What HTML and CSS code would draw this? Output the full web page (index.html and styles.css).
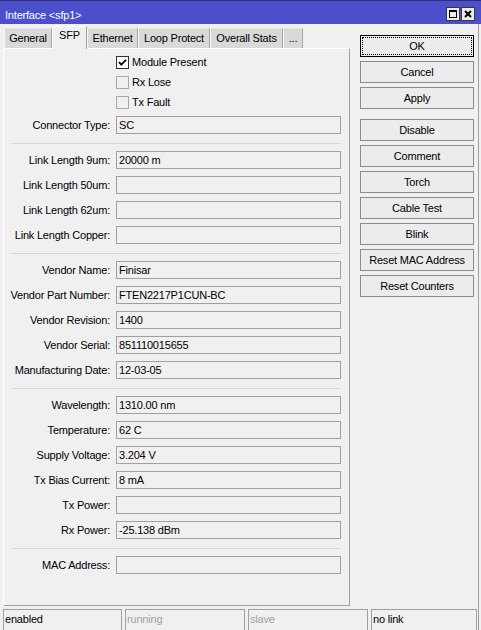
FILE: index.html
```html
<!DOCTYPE html>
<html>
<head>
<meta charset="utf-8">
<title>Interface &lt;sfp1&gt;</title>
<link rel="stylesheet" href="styles.css">
</head>
<body>
<div class="window">
  <div class="titlebar">
    <span class="title">Interface &lt;sfp1&gt;</span>
    <div class="tb-btns">
      <span class="tb-btn"><svg width="12" height="12" viewBox="0 0 12 12"><rect x="2.5" y="2.5" width="7" height="7" fill="none" stroke="#000" stroke-width="1"/><rect x="2" y="2" width="8" height="2" fill="#000"/></svg></span>
      <span class="tb-btn"><svg width="12" height="12" viewBox="0 0 12 12"><path d="M3 3 L9 9 M9 3 L3 9" stroke="#000" stroke-width="2" fill="none"/></svg></span>
    </div>
  </div>
  <div class="body-area">
    <div class="main">
      <div class="left">
        <div class="tabs">
          <span class="tab t-general">General</span>
          <span class="tab active t-sfp">SFP</span>
          <span class="tab t-eth">Ethernet</span>
          <span class="tab t-loop">Loop Protect</span>
          <span class="tab t-stats">Overall Stats</span>
          <span class="tab t-more">...</span>
        </div>
        <div class="panel">
          <div class="form">
            <div class="chk-row"><span class="cb checked"><svg width="11" height="11" viewBox="0 0 11 11"><path d="M2 5.2 L4.3 7.6 L9 2.8" stroke="#000" stroke-width="1.8" fill="none"/></svg></span><span class="chk-label">Module Present</span></div>
            <div class="chk-row"><span class="cb"></span><span class="chk-label">Rx Lose</span></div>
            <div class="chk-row"><span class="cb"></span><span class="chk-label">Tx Fault</span></div>
            <div class="row"><span class="lbl">Connector Type:</span><span class="field">SC</span></div>
            <div class="sep"></div>
            <div class="row"><span class="lbl">Link Length 9um:</span><span class="field">20000 m</span></div>
            <div class="row"><span class="lbl">Link Length 50um:</span><span class="field"></span></div>
            <div class="row"><span class="lbl">Link Length 62um:</span><span class="field"></span></div>
            <div class="row"><span class="lbl">Link Length Copper:</span><span class="field"></span></div>
            <div class="sep"></div>
            <div class="row"><span class="lbl">Vendor Name:</span><span class="field">Finisar</span></div>
            <div class="row"><span class="lbl">Vendor Part Number:</span><span class="field">FTEN2217P1CUN-BC</span></div>
            <div class="row"><span class="lbl">Vendor Revision:</span><span class="field">1400</span></div>
            <div class="row"><span class="lbl">Vendor Serial:</span><span class="field">851110015655</span></div>
            <div class="row"><span class="lbl">Manufacturing Date:</span><span class="field">12-03-05</span></div>
            <div class="sep"></div>
            <div class="row"><span class="lbl">Wavelength:</span><span class="field">1310.00 nm</span></div>
            <div class="row"><span class="lbl">Temperature:</span><span class="field">62 C</span></div>
            <div class="row"><span class="lbl">Supply Voltage:</span><span class="field">3.204 V</span></div>
            <div class="row"><span class="lbl">Tx Bias Current:</span><span class="field">8 mA</span></div>
            <div class="row"><span class="lbl">Tx Power:</span><span class="field"></span></div>
            <div class="row"><span class="lbl">Rx Power:</span><span class="field">-25.138 dBm</span></div>
            <div class="sep"></div>
            <div class="row"><span class="lbl">MAC Address:</span><span class="field"></span></div>
          </div>
        </div>
      </div>
      <div class="buttons">
        <div class="btn btn-ok">OK</div>
        <div class="btn">Cancel</div>
        <div class="btn">Apply</div>
        <div class="btn group-start">Disable</div>
        <div class="btn">Comment</div>
        <div class="btn">Torch</div>
        <div class="btn">Cable Test</div>
        <div class="btn">Blink</div>
        <div class="btn">Reset MAC Address</div>
        <div class="btn">Reset Counters</div>
      </div>
    </div>
    <div class="status">
      <span class="cell c1">enabled</span>
      <span class="cell c2 dim">running</span>
      <span class="cell c3 dim">slave</span>
      <span class="cell c4">no link</span>
    </div>
  </div>
</div>
</body>
</html>
```
FILE: styles.css
```css
html, body {
  margin: 0;
  padding: 0;
  background: #f0f0f0;
}
body {
  font-family: "Liberation Sans", Arial, sans-serif;
  font-size: 11px;
  letter-spacing: -0.2px;
  color: #000;
}
.window {
  width: 481px;
  height: 630px;
  overflow: hidden;
  background: #f0f0f0;
}
.titlebar {
  height: 24px;
  box-sizing: border-box;
  border-top: 1px solid #2d2f6e;
  background: #4b4fcc;
  display: flex;
  align-items: flex-start;
  padding-left: 5px;
}
.title {
  color: #fff;
  line-height: 13px;
  margin-top: 8px;
}
.tb-btns {
  margin-left: auto;
  margin-right: 6px;
  margin-top: 6px;
  display: flex;
  gap: 1px;
}
.tb-btn {
  width: 14px;
  height: 14px;
  box-sizing: border-box;
  border: 1px solid #3a3a3a;
  background: #ececec;
  display: flex;
  align-items: center;
  justify-content: center;
}
.tb-btn svg { display: block; }
.body-area {
  width: 479px;
  box-sizing: border-box;
  border-right: 1px solid #a0a0a0;
  height: 606px;
}
.main {
  display: flex;
  height: 582px;
}
.left {
  margin-left: 3px;
  width: 347px;
  display: flex;
  flex-direction: column;
}
.tabs {
  display: flex;
  margin-top: 2px;
  margin-left: 1px;
  height: 22px;
  align-items: flex-end;
}
.tab {
  box-sizing: border-box;
  height: 20px;
  line-height: 18px;
  text-align: center;
  background: #d9d9d9;
  border-top: 1px solid #e6e6e6;
  border-left: 1px solid #f6f6f6;
  border-right: 1px solid #a8a8a8;
  white-space: nowrap;
}
.tab.active {
  height: 23px;
  line-height: 17px;
  margin-bottom: -1px;
  background: #f0f0f0;
  border-top: 1px solid #ffffff;
  border-left: 1px solid #ffffff;
  border-right: 1px solid #a0a0a0;
  position: relative;
  z-index: 1;
  padding-bottom: 3px;
}
.t-general { width: 48px; }
.t-sfp { width: 35px; }
.t-eth { width: 51px; }
.t-loop { width: 72px; }
.t-stats { width: 73px; }
.t-more { width: 20px; }
.panel {
  flex: 1;
  box-sizing: border-box;
  border-top: 1px solid #ffffff;
  border-left: 1px solid #ffffff;
  border-right: 1px solid #a0a0a0;
  border-bottom: 1px solid #a0a0a0;
  background: #f0f0f0;
}
.form {
  display: flex;
  flex-direction: column;
  gap: 7px;
  padding-top: 7px;
}
.chk-row {
  height: 13px;
  display: flex;
  align-items: center;
  padding-left: 112px;
}
.cb {
  width: 13px;
  height: 13px;
  box-sizing: border-box;
  border: 1px solid #a8a8a8;
  background: #f0f0f0;
  display: flex;
  align-items: center;
  justify-content: center;
}
.cb.checked {
  border-color: #333;
  background: #fff;
}
.cb svg { display: block; }
.chk-label {
  margin-left: 3px;
  line-height: 13px;
}
.row {
  height: 18px;
  display: flex;
  align-items: center;
}
.lbl {
  width: 106px;
  text-align: right;
  margin-right: 6px;
  white-space: nowrap;
}
.field {
  width: 225px;
  height: 18px;
  box-sizing: border-box;
  border: 1px solid #a0a0a0;
  background: #f0f0f0;
  padding-left: 2px;
  line-height: 16px;
  white-space: nowrap;
}
.sep {
  height: 3px;
  margin-left: 7px;
  width: 330px;
  box-sizing: border-box;
  border-bottom: 1px solid #d6d6d6;
}
.buttons {
  margin-left: 10px;
  width: 114px;
  padding-top: 11px;
  display: flex;
  flex-direction: column;
  gap: 4px;
}
.btn {
  height: 22px;
  box-sizing: border-box;
  border: 1px solid #8c8c8c;
  background: #ececec;
  text-align: center;
  line-height: 20px;
  white-space: nowrap;
}
.btn-ok {
  border-color: #000;
  outline: 1px dotted #000;
  outline-offset: -3px;
}
.group-start {
  margin-top: 6px;
}
.status {
  display: flex;
  gap: 3px;
  margin-top: 3px;
  padding-left: 3px;
}
.cell {
  height: 21px;
  box-sizing: border-box;
  border: 1px solid #a0a0a0;
  border-bottom: none;
  padding-left: 1px;
  line-height: 18px;
  white-space: nowrap;
}
.c1 { width: 119px; }
.c2 { width: 120px; }
.c3 { width: 120px; }
.c4 { width: 106px; }
.dim { color: #a0a0a0; }
```
